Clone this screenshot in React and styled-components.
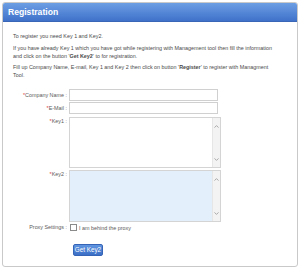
import React from "react";
import styled, { createGlobalStyle } from "styled-components";

const Global = createGlobalStyle`
  html, body { margin: 0; padding: 0; background: #ffffff; }
  body { font-family: "Liberation Sans", Arial, sans-serif; }
  * { box-sizing: border-box; }
`;

const Panel = styled.div`
  margin: 2px 2px 0 2px;
  width: 296px;
  height: 265px;
  border: 1px solid #c9c9c9;
  border-radius: 3px;
  background: #fff;
  overflow: hidden;
`;

const Header = styled.div`
  height: 19px;
  background: linear-gradient(#6c9ee4, #3f71ca);
  color: #fff;
  font-weight: bold;
  font-size: 8.6px;
  line-height: 19px;
  padding-left: 5px;
  border-bottom: 1px solid #3a66b8;
`;

const Body = styled.div`
  padding: 10px 10px 0 10px;
  color: #4a4a4a;
  font-size: 5.4px;
`;

const Para = styled.p`
  margin: 0 0 ${(p) => p.$mb || 3}px 0;
  line-height: 8px;
`;

const Form = styled.div`
  display: grid;
  grid-template-columns: 65px 152px;
  column-gap: 1px;
  margin: 10px 0 0 -10px;
  font-size: 5.4px;
  color: #5a5a5a;
`;

const Label = styled.div`
  text-align: right;
  padding-right: 1px;
  line-height: ${(p) => (p.$top ? "6px" : "12px")};
  margin-top: ${(p) => p.$mt || 0}px;
  height: ${(p) => p.$h || 12}px;
`;

const ProxyLabel = styled(Label)`
  line-height: 9px;
  height: 9px;
`;

const Star = styled.span`
  color: #e03c3c;
`;

const Input = styled.div`
  width: 149px;
  height: 12px;
  border: 1px solid #d0d0d0;
  background: #fff;
  margin-top: ${(p) => p.$mt || 0}px;
`;

const Area = styled.div`
  width: 152px;
  height: ${(p) => p.$h}px;
  border: 1px solid #d4d4d4;
  background: ${(p) => (p.$bg ? "#e3f0fb" : "#fff")};
  margin-top: ${(p) => p.$mt || 0}px;
  display: flex;
  justify-content: flex-end;
`;

const Scroll = styled.div`
  width: 8px;
  height: 100%;
  background: #f3f3f3;
  border-left: 1px solid #e6e6e6;
  display: flex;
  flex-direction: column;
  justify-content: space-between;
  align-items: center;
  padding: 7px 0 6px;
`;

const Chevron = ({ up }) => (
  <svg width="5" height="3" viewBox="0 0 5 3" style={{ display: "block" }}>
    <path
      d={up ? "M0.5 2.6 L2.5 0.6 L4.5 2.6" : "M0.5 0.4 L2.5 2.4 L4.5 0.4"}
      fill="none"
      stroke="#a0a0a0"
      strokeWidth="0.9"
    />
  </svg>
);

const CheckRow = styled.div`
  display: flex;
  align-items: center;
  gap: 2px;
  height: 9px;
  margin-top: 1px;
  padding-left: 1px;
`;

const Box = styled.span`
  width: 7px;
  height: 7px;
  border: 1px solid #8a8a8a;
  background: #fff;
  display: inline-block;
`;

const Button = styled.div`
  margin: 12px 0 0 4px;
  width: 30px;
  height: 12px;
  border-radius: 2px;
  background: linear-gradient(#5f95e0, #3b6fc6);
  border: 1px solid #3564b6;
  color: #fff;
  font-size: 6.3px;
  line-height: 10px;
  text-align: center;
`;

export default function App() {
  return (
    <>
      <Global />
      <Panel>
        <Header>Registration</Header>
        <Body>
          <Para $mb={4}>To register you need Key 1 and Key2.</Para>
          <Para $mb={3}>
            If you have already Key 1 which you have got while registering with Management tool then fill the information
            <br />
            and click on the button '<b>Get Key2</b>' to for registration.
          </Para>
          <Para>
            Fill up Company Name, E-mail, Key 1 and Key 2 then click on button '<b>Register</b>' to register with Managment
            <br />
            Tool.
          </Para>
          <Form>
            <Label>
              <Star>*</Star>Company Name :
            </Label>
            <Input />
            <Label $mt={1}>
              <Star>*</Star>E-Mail :
            </Label>
            <Input $mt={1} />
            <Label $top $mt={4} $h={50}>
              <Star>*</Star>Key1 :
            </Label>
            <Area $h={51} $mt={3}>
              <Scroll>
                <Chevron up />
                <Chevron />
              </Scroll>
            </Area>
            <Label $top $mt={3} $h={51}>
              <Star>*</Star>Key2 :
            </Label>
            <Area $h={52} $mt={2} $bg>
              <Scroll>
                <Chevron up />
                <Chevron />
              </Scroll>
            </Area>
            <ProxyLabel $mt={1}>Proxy Settings :</ProxyLabel>
            <CheckRow>
              <Box />
              <span>I am behind the proxy</span>
            </CheckRow>
            <div />
            <Button>Get Key2</Button>
          </Form>
        </Body>
      </Panel>
    </>
  );
}
